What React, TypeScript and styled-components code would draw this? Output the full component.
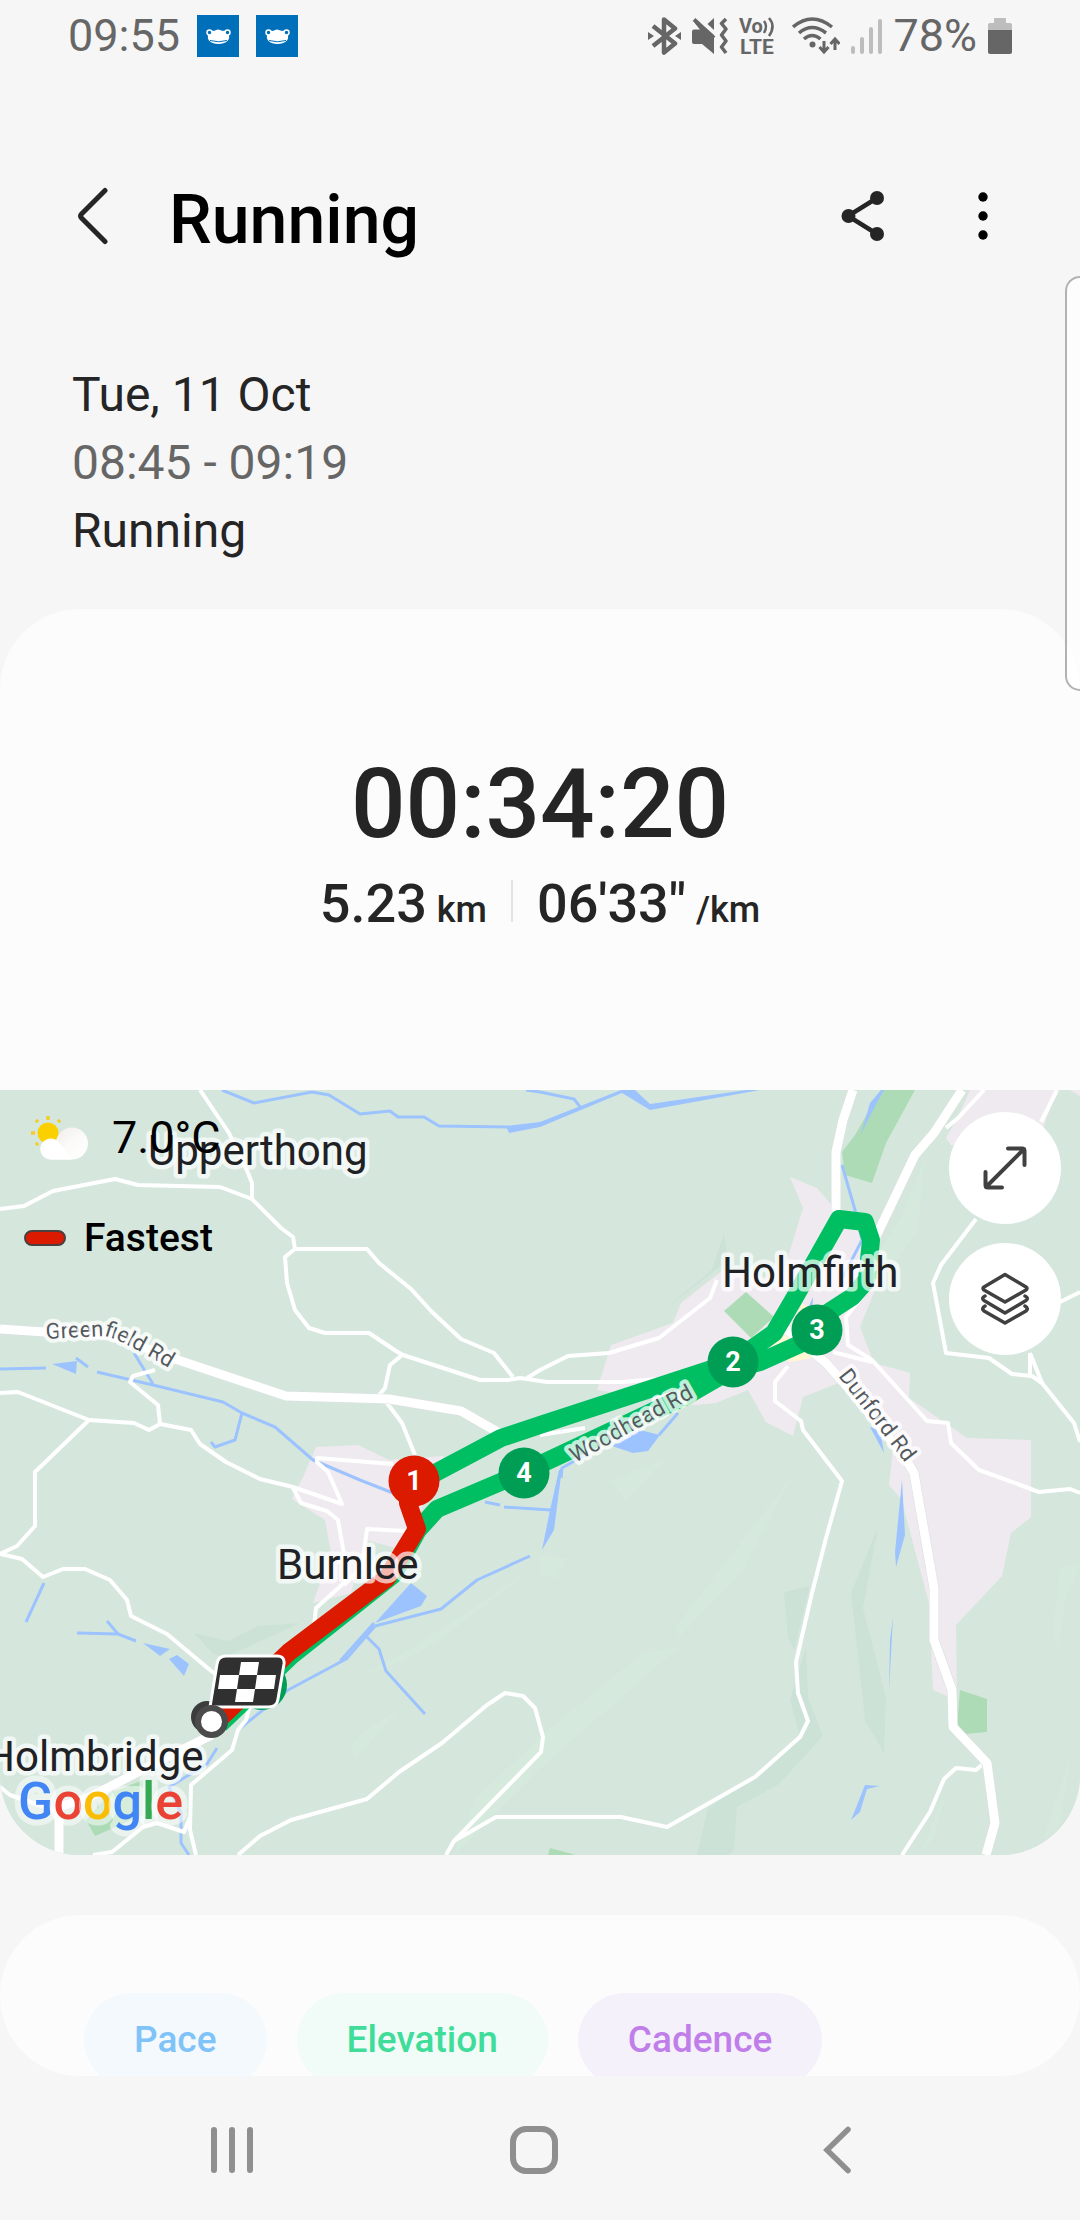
import React from "react";
import styled, { createGlobalStyle } from "styled-components";

const GlobalStyle = createGlobalStyle`
  * { box-sizing: border-box; }
  body {
    margin: 0;
    background: #f6f6f6;
    color: #252525;
    font-family: Roboto, "Noto Sans", sans-serif;
  }
  button {
    margin: 0;
    padding: 0;
    border: 0;
    background: none;
    color: inherit;
    font: inherit;
    cursor: pointer;
  }
  svg { display: block; flex: none; }
  h1, p { margin: 0; }
`;

const Page = styled.div`
  display: flex;
  flex-direction: column;
  min-height: 100vh;
`;

const StatusBar = styled.div`
  display: flex;
  align-items: center;
  justify-content: space-between;
  height: 72px;
  padding: 0 68px;
  font-size: 45px;
  line-height: 72px;
  color: #666;
`;

const StatusGroup = styled.div<{ $gap: number }>`
  display: flex;
  align-items: center;
  gap: ${(p) => p.$gap}px;
`;

const Header = styled.header`
  display: flex;
  align-items: flex-start;
  padding: 96px 67px 0 62px;
`;

const IconButton = styled.button`
  display: flex;
  align-items: center;
  justify-content: center;
  width: 60px;
  height: 96px;
`;

const Title = styled.h1`
  flex: 1;
  margin-left: 47px;
  font-size: 68px;
  font-weight: 500;
  line-height: 104px;
  color: #000;
`;

const HeaderActions = styled.div`
  display: flex;
  gap: 60px;
`;

const Session = styled.section`
  padding: 89px 72px 44px;
  font-size: 48px;
  line-height: 68px;
`;

const SessionLine = styled.p<{ $muted?: boolean }>`
  color: ${(p) => (p.$muted ? "#666" : "#252525")};
`;

const Summary = styled.section`
  padding: 139px 0 154px;
  border-radius: 80px 80px 0 0;
  background: #fcfcfc;
  font-weight: 500;
`;

const Duration = styled.p`
  font-size: 96px;
  line-height: 112px;
  text-align: center;
`;

const Metrics = styled.div`
  display: flex;
  justify-content: center;
  gap: 24px;
  margin-top: 12px;
`;

const Metric = styled.p`
  display: flex;
  align-items: baseline;
  gap: 10px;
  font-size: 54px;
  line-height: 64px;
`;

const Unit = styled.span`
  font-size: 36px;
  line-height: 36px;
`;

const Divider = styled.span`
  width: 2px;
  height: 42px;
  margin-top: 8px;
  background: #e3e3e3;
`;

const MapCard = styled.section`
  position: relative;
  overflow: hidden;
  border-radius: 0 0 80px 80px;
  background: #d5e7dd;
`;

const MapDrawing = styled.svg`
  width: 100%;
  height: auto;
`;

const MapInfo = styled.div`
  position: absolute;
  top: 12px;
  left: 24px;
  display: flex;
  flex-direction: column;
  gap: 28px;
  color: #000;
`;

const Weather = styled.div`
  display: flex;
  align-items: center;
  gap: 22px;
  font-size: 45px;
  line-height: 72px;
`;

const Legend = styled.div`
  display: flex;
  align-items: center;
  gap: 18px;
  font-size: 39px;
  font-weight: 500;
  line-height: 72px;
`;

const LegendSwatch = styled.span`
  width: 42px;
  height: 16px;
  border: 2px solid #4a4040;
  border-radius: 8px;
  background: #db1a00;
`;

const MapControls = styled.div`
  position: absolute;
  top: 22px;
  right: 19px;
  display: flex;
  flex-direction: column;
  gap: 19px;
`;

const RoundButton = styled.button`
  display: flex;
  align-items: center;
  justify-content: center;
  width: 112px;
  height: 112px;
  border-radius: 50%;
  background: #fff;
`;

const Charts = styled.section`
  display: flex;
  flex: 1 1 0;
  align-items: flex-start;
  gap: 30px;
  min-height: 160px;
  margin-top: 60px;
  padding: 78px 84px 0;
  overflow: hidden;
  border-radius: 80px;
  background: #fcfcfc;
`;

const Chip = styled.button<{ $ink: string; $fill: string }>`
  flex: none;
  padding: 0 50px;
  border-radius: 47px;
  font-size: 37px;
  font-weight: 500;
  line-height: 94px;
  color: ${(p) => p.$ink};
  background: ${(p) => p.$fill};
`;

const NavBar = styled.nav`
  display: grid;
  grid-template-columns: repeat(3, 1fr);
  height: 144px;
  padding: 4px 92px 0 81px;
`;

const NavButton = styled.button`
  display: flex;
  align-items: center;
  justify-content: center;
`;

const EdgeHandle = styled.div`
  position: fixed;
  top: 276px;
  right: 0;
  width: 15px;
  height: 415px;
  border: 2px solid #b2b2b2;
  border-right: 0;
  border-radius: 16px 0 0 16px;
  background: rgba(255, 255, 255, 0.8);
`;

const Frog = () => (
  <svg width="42" height="42" viewBox="0 0 42 42">
    <rect width="42" height="42" fill="#006fba" />
    <path
      d="M11 21C11 17 14 15 17 16L19 15L21 14.500L23 15L26 16C29 15 32 17 32 21C33 25 29 29 21.500 29C14 29 10 25 11 21Z"
      fill="#fff"
    />
    <circle cx="12.500" cy="17.500" r="2.500" fill="#006fba" stroke="#fff" strokeWidth="1.500" />
    <circle cx="30.500" cy="17.500" r="2.500" fill="#006fba" stroke="#fff" strokeWidth="1.500" />
    <path d="M13 25.500Q21.500 28 30 25.500" fill="none" stroke="#006fba" strokeWidth="1" />
  </svg>
);

const Bluetooth = () => (
  <svg width="33" height="38" viewBox="0 0 33 38">
    <path
      d="M5 9L27 26.500L16 35.500V2.500L27 11.500L5 29"
      fill="none"
      stroke="#666"
      strokeWidth="4.500"
      strokeLinejoin="round"
    />
    <path d="M0 15L6 19L0 23ZM33 15L27 19L33 23Z" fill="#666" />
  </svg>
);

const MuteVibrate = () => (
  <svg width="36" height="38" viewBox="0 0 36 38">
    <path d="M2 12.500H8L3 6.500L4 3L22 18V37L10 27H2Q0 27 0 25V14.500Q0 12.500 2 12.500Z" fill="#666" />
    <path d="M2 2.500L22 21" stroke="#666" strokeWidth="4" />
    <path d="M15.500 7L22 1V13Z" fill="#666" />
    <path
      d="M34 2L29.500 6.500L34 12L29.500 18L34 24L29.500 30L34 36"
      fill="none"
      stroke="#666"
      strokeWidth="3.500"
      strokeLinejoin="round"
    />
  </svg>
);

const VoLte = () => (
  <svg width="42" height="44" viewBox="0 -3 42 44" fontFamily="Roboto, sans-serif" fontWeight="700" fill="#666">
    <text x="0" y="16" fontSize="20">Vo</text>
    <text x="1" y="37" fontSize="21">LTE</text>
    <path d="M25 4Q29 9 25 16M30 1Q37 9 30 19" fill="none" stroke="#666" strokeWidth="2.500" />
  </svg>
);

const Wifi = () => (
  <svg width="48" height="38" viewBox="0 0 48 38" fill="none" stroke="#666" strokeWidth="3.500">
    <path d="M1 10Q20 -6 40 10M7 16Q20 5 34 16M12 22Q20 15 28.500 22" />
    <circle cx="20.500" cy="27.500" r="3" fill="#666" stroke="none" />
    <path d="M32 24V34M27.500 30L32 35L36.500 30M43 33V23M38.500 27L43 22L47.500 27" strokeWidth="3" />
  </svg>
);

const Signal = () => (
  <svg width="31" height="38" viewBox="0 0 31 38" stroke="#bdbdbd" strokeWidth="4" strokeLinecap="round">
    <path d="M2 31V35M11 22V35M20 12V35M29 4V35" />
  </svg>
);

const Battery = () => (
  <svg width="24" height="38" viewBox="0 0 24 38">
    <path d="M6 2Q6 1 7 1H17Q18 1 18 2V6H22Q24 6 24 8V16H0V8Q0 6 2 6H6Z" fill="#bdbdbd" />
    <path d="M0 13H24V35Q24 37 22 37H2Q0 37 0 35Z" fill="#666" />
  </svg>
);

const BackIcon = () => (
  <svg width="32" height="58" viewBox="0 0 32 58">
    <path
      d="M29 3.500L5.500 27Q3.500 29 5.500 31L29 54.500"
      fill="none"
      stroke="#252525"
      strokeWidth="5"
      strokeLinecap="round"
    />
  </svg>
);

const ShareIcon = () => (
  <svg width="44" height="52" viewBox="0 0 44 52" fill="#252525">
    <path d="M36 8L7 26L36 44" fill="none" stroke="#252525" strokeWidth="4.500" />
    <circle cx="36" cy="8" r="7" />
    <circle cx="7.500" cy="26" r="7" />
    <circle cx="36" cy="44" r="7" />
  </svg>
);

const MoreIcon = () => (
  <svg width="12" height="50" viewBox="0 0 12 50" fill="#000">
    <circle cx="6" cy="6" r="4.700" />
    <circle cx="6" cy="25" r="4.700" />
    <circle cx="6" cy="44" r="4.700" />
  </svg>
);

const SunCloud = () => (
  <svg width="66" height="50" viewBox="24 1113 66 50">
    <defs>
      <linearGradient id="cloud" x1="0" y1="0" x2="1" y2="1">
        <stop offset="0" stopColor="#efe9e4" />
        <stop offset="0.5" stopColor="#fbfaf9" />
        <stop offset="1" stopColor="#fff" />
      </linearGradient>
    </defs>
    <circle cx="48" cy="1133" r="10.500" fill="#fbd000" />
    <path
      d="M48 1116V1120M58 1122L60 1120M38 1122L36 1120M31 1133H35M38 1143L36 1145"
      stroke="#f5cc2c"
      strokeWidth="3.500"
    />
    <path d="M56 1143A16 16 0 1 1 71 1159.500H50Z" fill="url(#cloud)" />
    <path d="M50 1159.500A10.500 10.500 0 1 1 60 1144L72 1159.500Z" fill="#fff" />
  </svg>
);

const ExpandIcon = () => (
  <svg
    width="46"
    height="46"
    viewBox="0 0 46 46"
    fill="none"
    stroke="#404040"
    strokeWidth="4"
    strokeLinecap="round"
    strokeLinejoin="round"
  >
    <path d="M4 42L42 4M26 3.500H40Q42.500 3.500 42.500 6V20M3.500 27V40Q3.500 42.500 6 42.500H20" />
  </svg>
);

const LayersIcon = () => (
  <svg
    width="50"
    height="54"
    viewBox="0 0 50 54"
    fill="none"
    stroke="#404040"
    strokeWidth="3.500"
    strokeLinecap="round"
    strokeLinejoin="round"
  >
    <path d="M25 2.500L46 15Q48 16.500 46 18L25 30L4 18Q2 16.500 4 15Z" />
    <path d="M5 24Q1 26 4 28.500L25 41L46 28.500Q49 26 45 24" />
    <path d="M5 34Q1 36.500 4 39L25 51L46 39Q49 36.500 45 34" />
  </svg>
);

const urban = [
  "790,1177 817,1188 836,1210 879,1240 879,1280 860,1327 874,1363 910,1373 909,1398 967,1438 1031,1440 1031,1517 1011,1533 1002,1576 956,1625 957,1700 933,1690 929,1603 905,1513 902,1500 889,1485 893,1450 846,1380 803,1397 793,1436 766,1422 748,1390 716,1403 695,1405 597,1390 611,1345 673,1323 681,1303 723,1270 781,1280 803,1208",
  "970,1090 1057,1090 1036,1147 951,1145 946,1138 958,1117",
  "1070,1090 1080,1090 1080,1096",
  "316,1447 358,1445 389,1460 444,1456 424,1500 410,1552 366,1540 351,1593 313,1603 331,1553 325,1520 292,1499 303,1477",
];

const parks = [
  "881,1090 915,1090 886,1143 872,1183 845,1175 842,1152 855,1135",
  "746,1292 774,1317 751,1338 724,1311",
  "960,1690 987,1699 987,1732 964,1734 957,1727",
  "550,1848 576,1855 548,1855",
  "143,1780 110,1793 86,1820 95,1836 143,1815",
];

const shade = [
  "810,1586 784,1592 788,1638 794,1650",
  "806,1647 808,1698 823,1736 779,1784 737,1807 734,1850 729,1855 697,1855 708,1808 755,1777 800,1737 790,1700",
  "878,1527 851,1593 865,1720 884,1753 886,1698 863,1608",
  "194,1633 228,1641 258,1626 300,1623 224,1658 212,1653",
  "724,1233 728,1260 659,1314 712,1270",
];

const light = [
  "791,1478 676,1627 679,1637 743,1570",
  "678,1648 643,1653 540,1737 475,1800 454,1855 540,1768",
  "530,1570 425,1640 365,1675 405,1660 440,1640",
  "924,1160 900,1220 880,1250 868,1300 918,1230",
  "400,1708 360,1735 350,1750 357,1757",
  "610,1480 665,1460 626,1500",
  "540,1554 566,1559 556,1578 540,1575",
  "1060,1568 1080,1564 1065,1600 1058,1648 1053,1635",
  "944,1795 920,1855 935,1835",
  "1070,1758 1043,1840 1060,1825",
];

const waterAreas = [
  "506,1126 540,1122 621,1090 635,1090 650,1104 760,1088 760,1090 650,1110 622,1093 540,1127 509,1133",
  "881,1090 870,1103 861,1134 872,1112 884,1090",
  "52,1364 77,1361 76,1374",
  "559,1470 550,1510 542,1550 554,1530 562,1468",
  "640,1430 660,1435 648,1451 633,1453 612,1446",
  "411,1583 427,1596 421,1606 375,1623",
  "143,1643 170,1649 160,1656",
  "177,1655 189,1664 184,1676 169,1659",
  "902,1480 905,1535 896,1567 895,1552",
  "865,1785 880,1786 867,1789 860,1812 851,1820",
  "893,1617 889,1692 890,1640",
  "870,1427 884,1453 880,1430",
  "813,1297 805,1315 812,1312",
];

const streams = [
  "222,1090 254,1103 312,1092 329,1095 360,1114 390,1111 398,1117 424,1117 439,1126 508,1127",
  "540,1092 574,1099 581,1108",
  "526,1090 540,1092",
  "842,1165 855,1210 862,1240 843,1277",
  "0,1369 46,1368",
  "76,1358 88,1367",
  "97,1372 153,1385 223,1402 242,1413 275,1427 313,1460 360,1480 393,1493",
  "134,1353 153,1384",
  "242,1413 235,1440 215,1447 211,1442",
  "485,1502 500,1505",
  "504,1507 551,1510",
  "678,1413 659,1435",
  "561,1478 562,1468 585,1455",
  "375,1626 441,1609 477,1580 530,1556",
  "374,1623 341,1660 348,1657 375,1626",
  "348,1658 288,1690 238,1730",
  "367,1637 379,1649 386,1671 425,1714",
  "217,1748 207,1764 169,1787 181,1813 181,1843 189,1855",
  "44,1583 26,1622",
  "77,1633 118,1634 136,1641",
  "107,1621 118,1634",
];

const lanes = [
  "200,1090 229,1133 248,1173 252,1183 252,1199",
  "0,1209 24,1206 53,1191 115,1179 138,1185 220,1187 252,1199 281,1228 293,1237 295,1249 367,1249 379,1263 411,1289 432,1312 461,1339 494,1353 513,1377",
  "295,1249 285,1257 287,1283 295,1310 309,1328 325,1333 369,1333 396,1351 403,1355 480,1380 508,1380 520,1378 547,1382 623,1382 680,1377",
  "527,1378 540,1370 568,1356 609,1353 659,1338 710,1298 717,1280",
  "401,1356 390,1365 385,1388 379,1395",
  "387,1403 402,1423 415,1455",
  "155,1370 133,1376 130,1382 158,1405 160,1424",
  "0,1393 18,1392 89,1420 134,1423 149,1430 160,1424 191,1430 200,1444 226,1462 260,1479 293,1487 342,1504 328,1472 317,1462 317,1458 393,1464",
  "89,1420 35,1472 35,1526 17,1546 0,1554 22,1559 43,1577 63,1569 85,1569 110,1580 127,1600 131,1616 167,1634 210,1670 230,1685",
  "293,1488 301,1503 327,1511 338,1520 345,1560 344,1583 316,1608 313,1635",
  "406,1531 367,1529 362,1567 344,1585",
  "250,1705 246,1720 238,1730 232,1750 191,1785 190,1830 196,1855",
  "190,1817 184,1832 157,1823 143,1827 112,1852 93,1855",
  "0,1787 10,1795 59,1812",
  "238,1855 260,1836 291,1820 367,1799 399,1772 442,1743 487,1705 505,1693 523,1696 535,1708 543,1737 541,1752 454,1841 446,1855",
  "454,1841 496,1817 621,1817 667,1827 755,1777 800,1737 808,1721 798,1693 796,1662 812,1593 826,1538 842,1481 803,1430 801,1421 775,1401 775,1382 788,1366",
  "984,1090 958,1118 946,1128",
  "1057,1090 1041,1122",
  "976,1219 941,1265 933,1283 946,1353 989,1358 1012,1374 1032,1376 1042,1383 1074,1423 1080,1442",
  "1030,1353 1030,1375",
  "1030,1353 1042,1383",
  "1060,1302 1080,1292",
  "865,1293 846,1317 848,1345 872,1360 927,1421 948,1423 951,1443 979,1470 993,1475 1039,1492 1070,1489 1080,1493",
  "833,1352 872,1362",
  "902,1855 930,1812 944,1779 956,1768 976,1770 984,1763",
  "540,1435 585,1428",
];

const mainRoads = [
  "0,1329 45,1332 110,1335 172,1358 286,1396 389,1399 461,1411 501,1434",
  "212,1735 165,1758 90,1797 59,1807 59,1855",
  "853,1090 843,1120 836,1152 836,1215",
  "962,1090 934,1133 915,1155 872,1245",
  "781,1325 826,1363 850,1390 905,1458 914,1473 934,1588 934,1640 952,1690 953,1727 987,1763 995,1823 986,1855",
];

const greenRoute =
  "414,1484 437,1472 501,1438 540,1425 733,1362 774,1333 795,1297 839,1219 865,1222 871,1240 867,1280 852,1297 818,1319 818,1336 760,1362 733,1369 688,1395 524,1472 437,1509 418,1530 393,1575 291,1656 220,1724";

const redRoute = "414,1484 408,1503 417,1529 401,1555 387,1578 289,1652 214,1724";

const towns = [
  { name: "Upperthong", x: 148, y: 1165 },
  { name: "Holmfirth", x: 722, y: 1287 },
  { name: "Burnlee", x: 277, y: 1579 },
  { name: "Holmbridge", x: -15, y: 1771 },
];

const kilometres = [
  { n: 1, x: 414, y: 1481, fill: "#db1a00" },
  { n: 2, x: 733, y: 1362, fill: "#009e54" },
  { n: 3, x: 817, y: 1330, fill: "#009e54" },
  { n: 4, x: 524, y: 1473, fill: "#009e54" },
];

const brand: [string, string][] = [
  ["G", "#4285f4"],
  ["o", "#ea4335"],
  ["o", "#fbbc04"],
  ["g", "#4285f4"],
  ["l", "#34a853"],
  ["e", "#ea4335"],
];

const Areas = ({ list, fill }: { list: string[]; fill: string }) => (
  <g fill={fill}>
    {list.map((p) => (
      <polygon key={p} points={p} />
    ))}
  </g>
);

const Lines = ({ list, stroke, width }: { list: string[]; stroke: string; width: number }) => (
  <g fill="none" stroke={stroke} strokeWidth={width} strokeLinejoin="round">
    {list.map((p) => (
      <polyline key={p} points={p} />
    ))}
  </g>
);

const RouteMap = () => (
  <MapDrawing viewBox="0 1090 1080 765" role="img" aria-label="Route map" fontFamily="Roboto, sans-serif">
    <rect x="0" y="1090" width="1080" height="765" fill="#d5e7dd" />
    <Areas list={light} fill="#d5eadd" />
    <Areas list={shade} fill="#cce2d6" />
    <Areas list={urban} fill="#efeaef" />
    <Areas list={parks} fill="#acdbb6" />
    <polygon points="802,1303 790,1330 768,1350 790,1362 812,1358 825,1320" fill="#fff8d2" />
    <Areas list={waterAreas} fill="#9dc3ff" />
    <Lines list={streams} stroke="#9dc3ff" width={3} />
    <Lines list={lanes} stroke="#fff" width={4} />
    <Lines list={mainRoads} stroke="#dadfdf" width={10} />
    <Lines list={mainRoads} stroke="#fff" width={9} />
    <Lines list={[greenRoute]} stroke="#00bf63" width={18} />
    <circle cx="262" cy="1685" r="25" fill="#009e54" />
    <Lines list={[redRoute]} stroke="#db1a00" width={18} />

    <defs>
      <path id="greenfield" d="M46 1339L104 1336Q120 1338 180 1375" />
      <path id="woodhead" d="M575 1463L700 1394" />
      <path id="dunford" d="M838 1376L914 1474" />
    </defs>
    <g
      fontSize="22"
      fill="#54595e"
      stroke="#fff"
      strokeOpacity="0.75"
      strokeWidth="8"
      strokeLinejoin="round"
      paintOrder="stroke"
    >
      <text><textPath href="#greenfield">Greenfield Rd</textPath></text>
      <text><textPath href="#woodhead">Woodhead Rd</textPath></text>
      <text><textPath href="#dunford">Dunford Rd</textPath></text>
    </g>
    <g
      fontSize="42"
      fill="#202124"
      stroke="#fff"
      strokeOpacity="0.7"
      strokeWidth="9"
      strokeLinejoin="round"
      paintOrder="stroke"
    >
      {towns.map((t) => (
        <text key={t.name} x={t.x} y={t.y}>{t.name}</text>
      ))}
    </g>

    {kilometres.map((k) => (
      <g key={k.n}>
        <circle cx={k.x} cy={k.y} r="25.500" fill={k.fill} />
        <text x={k.x} y={k.y + 9} fontSize="27" fontWeight="700" textAnchor="middle" fill="#fff">{k.n}</text>
      </g>
    ))}

    <circle cx="207" cy="1717" r="16" fill="#3c3c3c" />
    <path
      d="M226 1656H277Q285 1656 284 1664L278 1699Q277 1707 269 1707H210L217 1664Q218 1656 226 1656Z"
      fill="#303030"
      stroke="#fff"
      strokeWidth="3"
    />
    <path
      d="M241 1662H259L257 1675H239ZM220 1675H239L237 1689H218ZM257 1675H276L274 1689H255ZM237 1689H255L253 1702H235Z"
      fill="#fff"
    />
    <circle cx="211.500" cy="1721.500" r="13.500" fill="#fff" stroke="#4b4b4b" strokeWidth="6" />

    <text
      x="18"
      y="1819"
      fontSize="52"
      fontWeight="500"
      stroke="#fff"
      strokeOpacity="0.5"
      strokeWidth="12"
      strokeLinejoin="round"
      paintOrder="stroke"
    >
      {brand.map(([letter, color], i) => (
        <tspan key={i} fill={color}>{letter}</tspan>
      ))}
    </text>
  </MapDrawing>
);

const chips = [
  { label: "Pace", ink: "#7fc3f8", fill: "#f4f9fd" },
  { label: "Elevation", ink: "#40dc9a", fill: "#f1fcf8" },
  { label: "Cadence", ink: "#c07ee9", fill: "#f5f1fb" },
];

export default function App() {
  return (
    <Page>
      <GlobalStyle />
      <StatusBar>
        <StatusGroup $gap={17}>
          <span>09:55</span>
          <Frog />
          <Frog />
        </StatusGroup>
        <StatusGroup $gap={11}>
          <Bluetooth />
          <MuteVibrate />
          <VoLte />
          <Wifi />
          <Signal />
          <span>78%</span>
          <Battery />
        </StatusGroup>
      </StatusBar>

      <Header>
        <IconButton aria-label="Back"><BackIcon /></IconButton>
        <Title>Running</Title>
        <HeaderActions>
          <IconButton aria-label="Share"><ShareIcon /></IconButton>
          <IconButton aria-label="More options"><MoreIcon /></IconButton>
        </HeaderActions>
      </Header>

      <Session>
        <SessionLine>Tue, 11 Oct</SessionLine>
        <SessionLine $muted>08:45 - 09:19</SessionLine>
        <SessionLine>Running</SessionLine>
      </Session>

      <Summary>
        <Duration>00:34:20</Duration>
        <Metrics>
          <Metric>5.23<Unit>km</Unit></Metric>
          <Divider />
          <Metric>06'33"<Unit>/km</Unit></Metric>
        </Metrics>
      </Summary>

      <MapCard>
        <RouteMap />
        <MapInfo>
          <Weather><SunCloud />7.0°C</Weather>
          <Legend><LegendSwatch />Fastest</Legend>
        </MapInfo>
        <MapControls>
          <RoundButton aria-label="Expand map"><ExpandIcon /></RoundButton>
          <RoundButton aria-label="Map layers"><LayersIcon /></RoundButton>
        </MapControls>
      </MapCard>

      <Charts>
        {chips.map((c) => (
          <Chip key={c.label} $ink={c.ink} $fill={c.fill}>{c.label}</Chip>
        ))}
      </Charts>

      <NavBar>
        <NavButton aria-label="Recent apps">
          <svg width="44" height="48" viewBox="0 0 44 48" stroke="#8f8f8f" strokeWidth="6" strokeLinecap="round">
            <path d="M4 4V44M22 4V44M40 4V44" />
          </svg>
        </NavButton>
        <NavButton aria-label="Home">
          <svg width="48" height="48" viewBox="0 0 48 48">
            <rect x="3" y="3" width="42" height="42" rx="13" fill="none" stroke="#8f8f8f" strokeWidth="6" />
          </svg>
        </NavButton>
        <NavButton aria-label="Back">
          <svg width="28" height="48" viewBox="0 0 28 48">
            <path d="M25 3.500L4 24L25 44.500" fill="none" stroke="#8f8f8f" strokeWidth="5.500" strokeLinecap="round" />
          </svg>
        </NavButton>
      </NavBar>

      <EdgeHandle />
    </Page>
  );
}
